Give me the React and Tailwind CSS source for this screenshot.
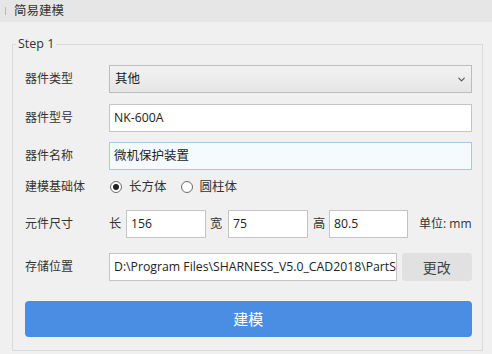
import { ChevronDown } from "lucide-react";

const font = { fontFamily: '"Open Sans", "Noto Sans CJK SC", sans-serif' };

function Label({ children }) {
  return (
    <div className="w-[84px] shrink-0 text-[12px] text-[#333]">{children}</div>
  );
}

function Radio({ checked, label }) {
  return (
    <div className="flex items-center">
      <span className="flex h-[12px] w-[12px] items-center justify-center rounded-full border border-[#6a6a6a] bg-white">
        {checked && <span className="h-[6px] w-[6px] rounded-full bg-[#222]" />}
      </span>
      <span className="ml-[7px] text-[12.5px] text-[#333]">{label}</span>
    </div>
  );
}

export default function App() {
  return (
    <div
      className="flex h-[354px] w-[492px] flex-col overflow-hidden bg-[#f0f0f0]"
      style={font}
    >
      {/* Title bar */}
      <div className="flex h-[22px] shrink-0 items-center bg-[#e6e6e6]">
        <span className="ml-[5px] h-[8px] w-[1px] bg-[#b8b8b8]" />
        <span className="ml-[8px] text-[12.5px] text-[#333]">简易建模</span>
      </div>

      {/* Group box */}
      <fieldset className="ml-[12px] mr-[10px] mt-[13px] border border-[#dadada] p-0">
        <legend className="ml-[3px] px-[2px] text-[12.5px] leading-[18px] text-[#333]">
          Step 1
        </legend>

        <div className="flex flex-col pb-[13px] pl-[12px] pr-[10px] pt-[12px]">
          {/* 器件类型 */}
          <div className="flex h-[28px] items-center">
            <Label>器件类型</Label>
            <div className="flex h-full flex-1 items-center justify-between border border-[#bcbcbc] bg-gradient-to-b from-[#f2f2f2] to-[#e6e6e6] pl-[5px] pr-[4px]">
              <span className="text-[12.5px] text-[#222]">其他</span>
              <ChevronDown className="h-[11px] w-[11px] text-[#555]" strokeWidth={2.5} />
            </div>
          </div>

          {/* 器件型号 */}
          <div className="mt-[11px] flex h-[28px] items-center">
            <Label>器件型号</Label>
            <div className="flex h-full flex-1 items-center border border-[#c4c4c4] bg-white pl-[4px] text-[12.25px] text-[#222]">
              NK-600A
            </div>
          </div>

          {/* 器件名称 */}
          <div className="mt-[10px] flex h-[28px] items-center">
            <Label>器件名称</Label>
            <div className="flex h-full flex-1 items-center border border-[#a9c6e4] bg-[#f5faff] pl-[4px] text-[12.5px] text-[#222]">
              微机保护装置
            </div>
          </div>

          {/* 建模基础体 */}
          <div className="mt-[7px] flex h-[20px] items-center">
            <Label>建模基础体</Label>
            <div className="ml-[1px] flex items-center gap-[14px]">
              <Radio checked label="长方体" />
              <Radio label="圆柱体" />
            </div>
          </div>

          {/* 元件尺寸 */}
          <div className="mt-[13px] flex h-[28px] items-center text-[12.25px] text-[#333]">
            <Label>元件尺寸</Label>
            <span className="w-[17px]">长</span>
            <div className="flex h-full w-[80px] items-center border border-[#c4c4c4] bg-white pl-[4px] text-[#222]">
              156
            </div>
            <span className="ml-[4px] w-[18px]">宽</span>
            <div className="flex h-full w-[80px] items-center border border-[#c4c4c4] bg-white pl-[4px] text-[#222]">
              75
            </div>
            <span className="ml-[5px] w-[16px]">高</span>
            <div className="flex h-full w-[79px] items-center border border-[#c4c4c4] bg-white pl-[4px] text-[#222]">
              80.5
            </div>
            <span className="ml-[11px] whitespace-nowrap text-[12px]">单位: mm</span>
          </div>

          {/* 存储位置 */}
          <div className="mt-[15px] flex h-[28px] items-center">
            <Label>存储位置</Label>
            <div className="flex h-full w-[288px] items-center overflow-hidden whitespace-nowrap border border-[#c4c4c4] bg-white pl-[4px] text-[12.25px] text-[#222]">
              D:\Program Files\SHARNESS_V5.0_CAD2018\PartSolution
            </div>
            <button className="ml-[5px] h-full flex-1 rounded-[3px] bg-[#e1e1e1] text-[14px] text-[#444]">
              更改
            </button>
          </div>

          {/* 建模 button */}
          <button className="mt-[20px] h-[36px] w-full rounded-[4px] bg-[#4a8ee4] text-[15px] text-white">
            建模
          </button>
        </div>
      </fieldset>
    </div>
  );
}
